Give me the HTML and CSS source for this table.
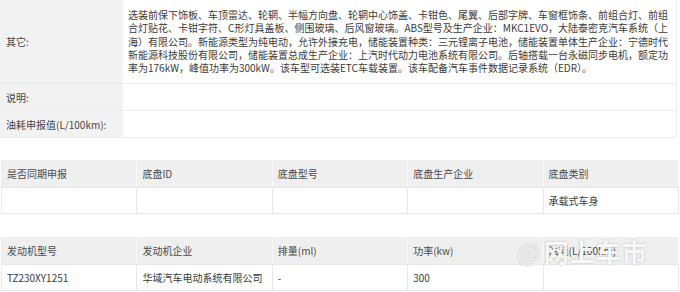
FILE: index.html
```html
<!DOCTYPE html>
<html lang="zh-CN">
<head>
<meta charset="utf-8">
<title>车型参数</title>
<link rel="stylesheet" href="styles.css">
</head>
<body>
<div class="page">
  <div class="kv">
    <div class="kv-label">其它:</div>
    <div class="kv-value multi">
      <span class="ln">选装前保下饰板、车顶雷达、轮辋、半幅方向盘、轮辋中心饰盖、卡钳色、尾翼、后部字牌、车窗框饰条、前组合灯、前组</span>
      <span class="ln">合灯贴花、卡钳字符、C形灯具盖板、侧围玻璃、后风窗玻璃。ABS型号及生产企业：MKC1EVO，大陆泰密克汽车系统（上</span>
      <span class="ln">海）有限公司。新能源类型为纯电动，允许外接充电，储能装置种类：三元锂离子电池，储能装置单体生产企业：宁德时代</span>
      <span class="ln">新能源科技股份有限公司，储能装置总成生产企业：上汽时代动力电池系统有限公司。后轴搭载一台永磁同步电机，额定功</span>
      <span class="ln">率为176kW，峰值功率为300kW。该车型可选装ETC车载装置。该车配备汽车事件数据记录系统（EDR）。</span>
    </div>
    <div class="kv-label">说明:</div>
    <div class="kv-value"></div>
    <div class="kv-label">油耗申报值(L/100km):</div>
    <div class="kv-value"></div>
  </div>

  <div class="grid5 gap1">
    <div class="th">是否同期申报</div>
    <div class="th">底盘ID</div>
    <div class="th">底盘型号</div>
    <div class="th">底盘生产企业</div>
    <div class="th">底盘类别</div>
    <div class="td"></div>
    <div class="td"></div>
    <div class="td"></div>
    <div class="td"></div>
    <div class="td">承载式车身</div>
  </div>

  <div class="grid5 gap2">
    <div class="th">发动机型号</div>
    <div class="th">发动机企业</div>
    <div class="th">排量(ml)</div>
    <div class="th">功率(kw)</div>
    <div class="th">油耗(L/100km)</div>
    <div class="td">TZ230XY1251</div>
    <div class="td">华域汽车电动系统有限公司</div>
    <div class="td">-</div>
    <div class="td">300</div>
    <div class="td"></div>
  </div>

  <div class="watermark"><span class="at">@</span>网上车市</div>
</div>
</body>
</html>
```

FILE: styles.css
```css
html, body {
  margin: 0;
  padding: 0;
  background: #ffffff;
}

.page {
  position: relative;
  width: 680px;
  height: 292px;
  overflow: hidden;
  font-family: "Noto Sans CJK SC", "Noto Sans", sans-serif;
  font-size: 10px;
  color: #3a3a3a;
}

.kv {
  display: grid;
  grid-template-columns: 123px 553px;
  width: 676px;
  border-right: 1px solid #ebebeb;
}

.kv-label {
  display: flex;
  align-items: center;
  padding: 0 6px;
  background: #f2f2f2;
  color: #444;
  border-bottom: 1px solid #ebebeb;
  height: 26px;
}

.kv-value {
  padding: 0 3px 0 5px;
  border-bottom: 1px solid #ebebeb;
  height: 26px;
}

.kv-value.multi {
  height: auto;
  padding: 8px 2px 9px 5px;
  line-height: 13.3px;
}

.kv-label:first-child {
  height: auto;
}

.ln {
  display: block;
  white-space: nowrap;
}

.grid5 {
  display: grid;
  grid-template-columns: repeat(5, 1fr);
  width: 677px;
  margin-left: 1px;
  border-left: 1px solid #ebebeb;
}

.gap1 {
  margin-top: 22px;
}

.gap2 {
  margin-top: 23px;
}

.th, .td {
  display: flex;
  align-items: center;
  height: 25px;
  padding: 0 5px;
  border-right: 1px solid #e6e6e6;
  border-bottom: 1px solid #e6e6e6;
  white-space: nowrap;
  overflow: hidden;
}

.th {
  background: #efefef;
  color: #4a4a4a;
  border-right-color: #f8f8f8;
  height: 27px;
}

.td {
  background: #ffffff;
  color: #3a3a3a;
}

.watermark {
  position: absolute;
  left: 517px;
  top: 236px;
  font-size: 25px;
  font-weight: 700;
  line-height: 30px;
  color: rgba(255, 255, 255, 0.92);
  text-shadow: 0 0 2px rgba(0, 0, 0, 0.28);
  letter-spacing: 1px;
  pointer-events: none;
}

.watermark .at {
  font-weight: 400;
  font-size: 24px;
  margin-right: 3px;
  color: rgba(255, 255, 255, 0.75);
}
```
